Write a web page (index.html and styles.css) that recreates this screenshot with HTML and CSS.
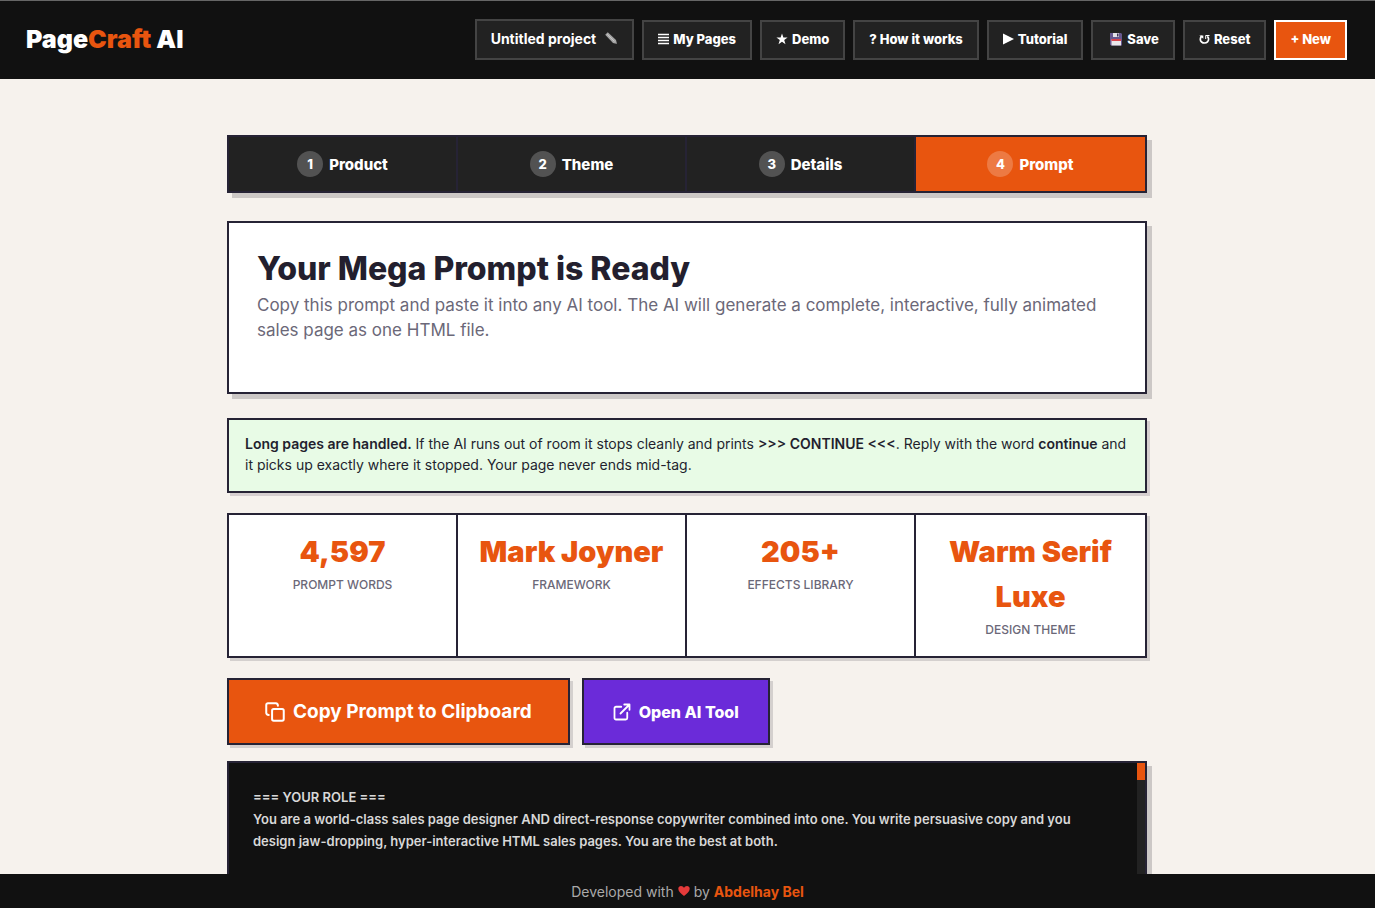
FILE: index.html
```html
<!DOCTYPE html>
<html lang="en">
<head>
<meta charset="utf-8">
<title>PageCraft AI</title>
<link rel="stylesheet" href="styles.css">
</head>
<body>
<header class="topbar">
  <a class="brand" href="#">Page<span class="brand-accent">Craft</span> AI</a>
  <nav class="toolbar">
    <button class="tool tool-project">Untitled project
      <svg class="pencil" width="14" height="14" viewBox="0 0 14 14"><path d="M1.200 3.800 3.800 1.200 12 9l1 4-4-1z" fill="#a5a5a5"/><path d="M3.100 3.200 10.400 10.400" stroke="#c8c8c8" stroke-width="1"/><path d="m11.800 11.800 1.200 1.200-1.600-.4z" fill="#555"/></svg>
    </button>
    <button class="tool"><svg width="11" height="12" viewBox="0 0 11 12"><path d="M0 1.500h11M0 4.500h11M0 7.500h11M0 10.500h11" stroke="#fff" stroke-width="1.300"/></svg>My Pages</button>
    <button class="tool"><svg width="12" height="12" viewBox="0 0 12 12"><path d="M6 .5 7.400 4.500h4.200L8.200 7l1.300 4.200L6 8.700l-3.500 2.500L3.800 7 .4 4.500h4.200z" fill="#fff"/></svg>Demo</button>
    <button class="tool">? How it works</button>
    <button class="tool"><svg width="11" height="12" viewBox="0 0 11 12"><path d="M0 .5 11 6 0 11.500z" fill="#fff"/></svg>Tutorial</button>
    <button class="tool tool-save"><svg width="14" height="14" viewBox="0 0 14 14"><path d="M1 1h11l1 1v11.500H2L1 12.500z" fill="#66588f"/><path d="M4 1h6v4H4z" fill="#e4e2e8"/><path d="M8 1.500h1.500v3H8z" fill="#3a3054"/><path d="M2.500 7.500h9.500v6H2.500z" fill="#e9e7ea"/><path d="M2.500 7h9.500v2H2.500z" fill="#d8434b"/></svg>Save</button>
    <button class="tool"><svg width="11" height="12" viewBox="0 0 11 12"><path d="M2.800 3C.8 4.800.9 7.600 2.600 9c1.700 1.400 4.400 1.300 5.900-.2C10 7.300 10 5 8.300 3.400" fill="none" stroke="#fff" stroke-width="1.700"/><path d="M.3 2.500h4v3.200z" fill="#fff"/><path d="M6.700 6V2.500h3.800" fill="none" stroke="#fff" stroke-width="1"/></svg>Reset</button>
    <button class="tool tool-new">+ New</button>
  </nav>
</header>

<main class="page">
  <nav class="steps">
    <button class="step"><span class="step-num">1</span>Product</button>
    <button class="step"><span class="step-num">2</span>Theme</button>
    <button class="step"><span class="step-num">3</span>Details</button>
    <button class="step step-active"><span class="step-num">4</span>Prompt</button>
  </nav>

  <section class="intro">
    <h1>Your Mega Prompt is Ready</h1>
    <p>Copy this prompt and paste it into any AI tool. The AI will generate a complete, interactive, fully animated sales page as one HTML file.</p>
  </section>

  <p class="note"><strong>Long pages are handled.</strong> If the AI runs out of room it stops cleanly and prints <strong>&gt;&gt;&gt; CONTINUE &lt;&lt;&lt;</strong>. Reply with the word <strong>continue</strong> and it picks up exactly where it stopped. Your page never ends mid-tag.</p>

  <section class="stats">
    <div class="stat"><div class="stat-value">4,597</div><div class="stat-label">PROMPT WORDS</div></div>
    <div class="stat"><div class="stat-value">Mark Joyner</div><div class="stat-label">FRAMEWORK</div></div>
    <div class="stat"><div class="stat-value">205+</div><div class="stat-label">EFFECTS LIBRARY</div></div>
    <div class="stat"><div class="stat-value">Warm Serif Luxe</div><div class="stat-label">DESIGN THEME</div></div>
  </section>

  <div class="actions">
    <button class="action action-copy"><svg width="20" height="20" viewBox="0 0 24 24" fill="none" stroke="#fff" stroke-width="2.400" stroke-linecap="round" stroke-linejoin="round"><rect x="8.500" y="8.500" width="14" height="14" rx="2"/><path d="M4.500 15.500c-1.500 0-3-1-3-2.500V3.500c0-1.100.9-2 2-2H13c1.500 0 2.500 1.500 2.500 3"/></svg>Copy Prompt to Clipboard</button>
    <button class="action action-open"><svg width="18" height="18" viewBox="0 0 24 24" fill="none" stroke="#fff" stroke-width="2.400" stroke-linecap="round" stroke-linejoin="round"><path d="M19 13v7a2 2 0 0 1-2 2H4a2 2 0 0 1-2-2V7a2 2 0 0 1 2-2h7"/><path d="M15 2h7v7M10 14 22 2"/></svg>Open AI Tool</button>
  </div>

  <section class="prompt">
    <p class="prompt-text">=== YOUR ROLE ===<br>You are a world-class sales page designer AND direct-response copywriter combined into one. You write persuasive copy and you design jaw-dropping, hyper-interactive HTML sales pages. You are the best at both.</p>
    <div class="track"><div class="thumb"></div></div>
  </section>
</main>

<footer class="footer">Developed with
  <svg width="12" height="12" viewBox="0 0 12 12"><path d="M6 11C3 8.700.300 6.500.300 3.800.300 2 1.500 1 3 1c1.300 0 2.400.7 3 1.900C6.600 1.700 7.700 1 9 1c1.500 0 2.700 1 2.700 2.800C11.700 6.500 9 8.700 6 11z" fill="#e53a3a"/></svg>
  by <a href="#">Abdelhay Bel</a>
</footer>
</body>
</html>
```
FILE: styles.css
```css
* {
  box-sizing: border-box;
}

body {
  display: flex;
  flex-direction: column;
  height: 100vh;
  margin: 0;
  border-right: 2px solid #fff;
  background: #f6f2ed;
  color: #231f2e;
  font-family: Inter, sans-serif;
}

button {
  font-family: inherit;
  cursor: pointer;
}

.topbar {
  display: flex;
  flex: none;
  align-items: center;
  justify-content: space-between;
  height: 79px;
  padding: 0 28px 2px 26px;
  border-top: 1px solid #666;
  background: #111;
}

.brand {
  color: #fff;
  font-size: 25px;
  font-weight: 900;
  line-height: 32px;
  text-decoration: none;
}

.brand-accent {
  color: #e8550f;
}

.toolbar {
  display: flex;
  align-items: flex-end;
  gap: 8px;
}

.tool {
  display: flex;
  align-items: center;
  justify-content: center;
  gap: 4px;
  height: 40px;
  padding: 0 14px 2px;
  border: 2px solid #444;
  background: #222;
  color: #fff;
  font-size: 13px;
  font-weight: 800;
  white-space: nowrap;
}

.tool-project {
  gap: 8px;
  height: 41px;
  font-size: 14px;
  font-weight: 700;
}

.tool-save {
  padding-left: 16px;
}

.tool-new {
  border-color: #fff;
  background: #e8550f;
}

.page {
  display: flex;
  flex: 1;
  flex-direction: column;
  width: 100%;
  min-height: 0;
  max-width: 921px;
  margin: 0 auto;
  padding: 56px 1px 0 0;
}

.steps {
  display: grid;
  flex: none;
  grid-template-columns: repeat(4, 1fr);
  height: 58px;
  border: 2px solid #262335;
  box-shadow: 5px 5px 0 #ccc8c6;
}

.step {
  display: flex;
  align-items: center;
  justify-content: center;
  gap: 6px;
  padding: 0;
  border: 0;
  border-right: 2px solid #262335;
  background: #222;
  color: #fff;
  font-size: 15px;
  font-weight: 800;
}

.step:last-child {
  border-right: 0;
}

.step-active {
  background: #e8550f;
}

.step-num {
  display: grid;
  place-items: center;
  width: 26px;
  height: 26px;
  border-radius: 50%;
  background: rgba(255, 255, 255, 0.22);
  font-size: 13px;
}

.intro {
  flex: none;
  min-height: 173px;
  margin-top: 28px;
  padding: 24px 28px;
  border: 2px solid #262335;
  background: #fff;
  box-shadow: 5px 5px 0 #ccc8c6;
}

h1 {
  margin: 0;
  font-size: 32px;
  font-weight: 800;
  line-height: 44px;
}

.intro p {
  margin: 2px 0 0;
  color: #6b6878;
  font-size: 17px;
  line-height: 25px;
}

.note {
  flex: none;
  min-height: 75px;
  margin: 24px 0 0;
  padding: 13px 12px 13px 16px;
  border: 2px solid #262335;
  background: #e8fbe6;
  box-shadow: 3px 3px 0 #d6cfd0;
  font-size: 14px;
  line-height: 21px;
}

.note strong {
  font-weight: 600;
}

.stats {
  display: grid;
  flex: none;
  grid-template-columns: repeat(4, 1fr);
  margin-top: 20px;
  border: 2px solid #262335;
  background: #fff;
  box-shadow: 3px 3px 0 #d4d0ce;
}

.stat {
  padding: 14px 16px 15px;
  border-right: 2px solid #262335;
  text-align: center;
}

.stat:last-child {
  border-right: 0;
}

.stat-value {
  color: #e8550f;
  font-size: 29px;
  font-weight: 900;
  line-height: 45px;
}

.stat-label {
  color: #6b6878;
  font-size: 12px;
  font-weight: 500;
  line-height: 22px;
}

.actions {
  display: flex;
  flex: none;
  gap: 12px;
  margin-top: 20px;
}

.action {
  display: flex;
  align-items: center;
  justify-content: center;
  gap: 8px;
  height: 67px;
  padding: 0 36px;
  border: 2px solid #262335;
  box-shadow: 3px 3px 0 #d4d0ce;
  color: #fff;
  font-size: 19px;
  font-weight: 700;
}

.action-copy {
  background: #e8550f;
}

.action-open {
  padding: 0 29px;
  background: #6b2bd9;
  font-size: 16px;
  font-weight: 800;
}

.prompt {
  display: flex;
  flex: 1;
  margin-top: 16px;
  border: 2px solid #262335;
  border-bottom: 0;
  background: #111;
  box-shadow: 5px 5px 0 #ccc8c6;
}

.prompt-text {
  flex: 1;
  margin: 0;
  padding: 23px 24px 0 24px;
  color: #d8d8d8;
  font-size: 13px;
  font-weight: 600;
  line-height: 22px;
}

.track {
  width: 8px;
  background: #222;
}

.thumb {
  height: 17px;
  background: #e8550f;
}

.footer {
  z-index: 1;
  display: flex;
  flex: none;
  align-items: center;
  justify-content: center;
  gap: 4px;
  height: 34px;
  background: #111;
  color: #aaa;
  font-size: 14px;
}

.footer a {
  color: #e8550f;
  font-weight: 700;
  text-decoration: none;
}
```
